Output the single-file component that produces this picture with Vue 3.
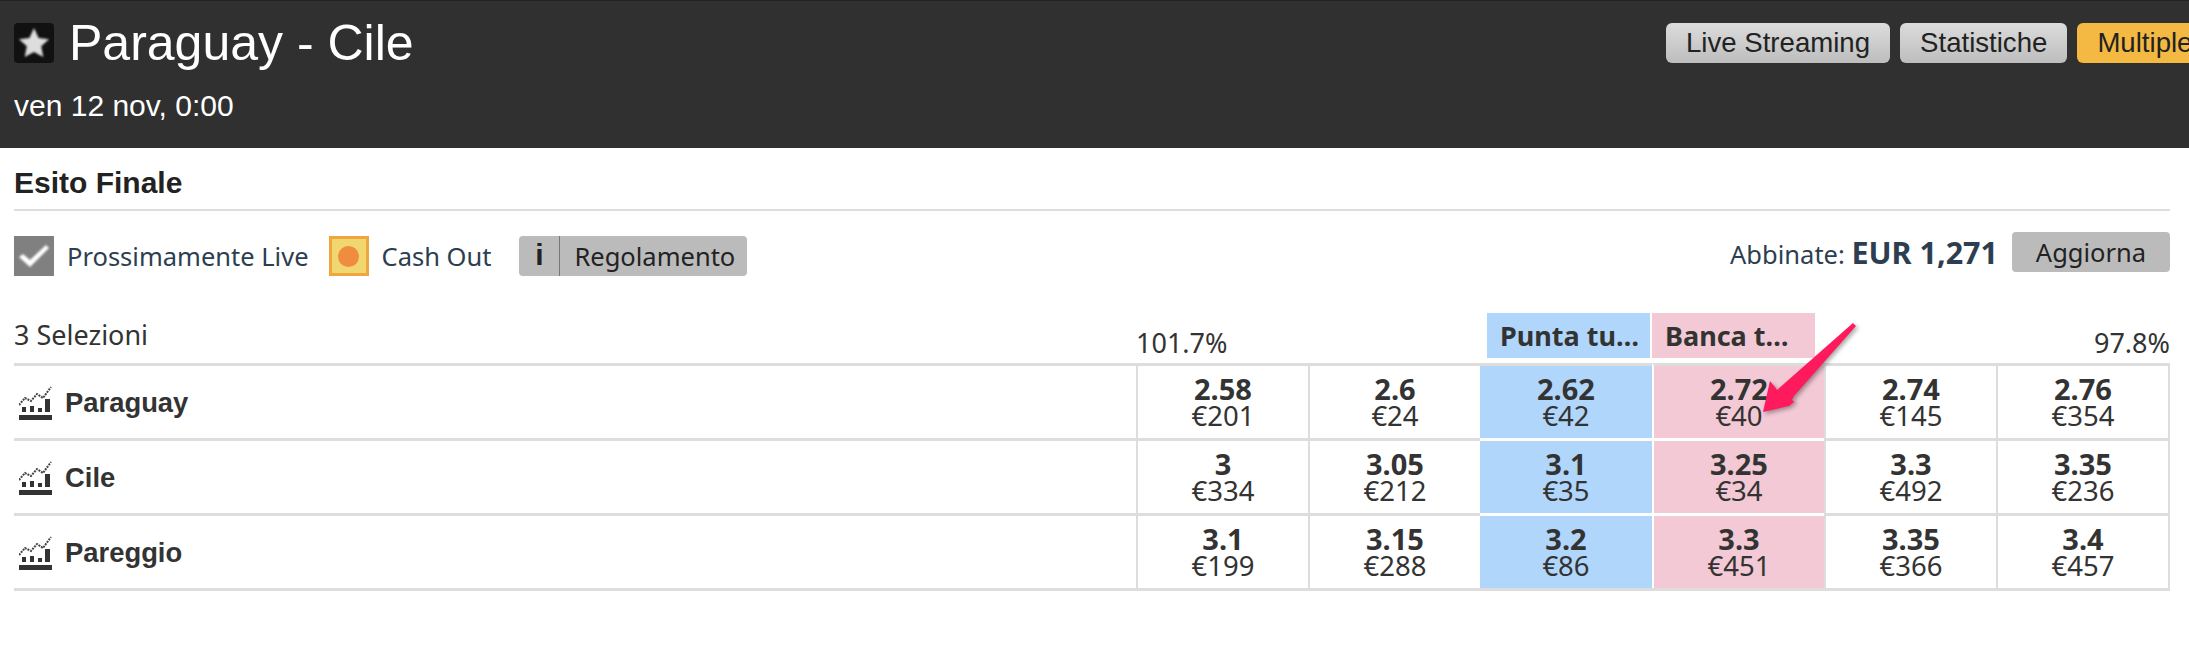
<template>
  <div class="page">
    <header class="event-head">
      <div class="event-info">
        <div class="event-title">
          <span class="fav">
            <svg width="40" height="40" viewBox="0 0 40 40"><path class="fav-star" d="M20 5l4.6 9.9 10.4 1.3-7.8 7.1 2.1 10.7L20 28.9l-9.3 5.1 2.1-10.7-7.8-7.1 10.4-1.3z" /></svg>
          </span>
          <h1>Paraguay - Cile</h1>
        </div>
        <div class="event-date">ven 12 nov, 0:00</div>
      </div>
      <div class="head-buttons">
        <button class="head-btn">Live Streaming</button>
        <button class="head-btn">Statistiche</button>
        <button class="head-btn active">Multiple</button>
      </div>
    </header>

    <main class="market">
      <h2 class="market-name">Esito Finale</h2>

      <div class="market-tools">
        <div class="tool-left">
          <span class="check-box">
            <svg width="40" height="40" viewBox="0 0 40 40"><path class="check-mark" d="M5 21l4-3 7 6L32 9l3 3-19 19z" /></svg>
          </span>
          <span class="tool-label live-label">Prossimamente Live</span>
          <span class="cash-box"><i></i></span>
          <span class="tool-label cash-label">Cash Out</span>
          <span class="rules-btn">
            <span class="rules-i">i</span>
            <span class="rules-text">Regolamento</span>
          </span>
        </div>
        <div class="tool-right">
          <span class="matched">Abbinate: <b>EUR 1,271</b></span>
          <button class="refresh">Aggiorna</button>
        </div>
      </div>

      <div class="col-head">
        <div class="sel-count">3 Selezioni</div>
        <div class="pct">101.7%</div>
        <div></div>
        <div class="all-btn back">Punta tu…</div>
        <div class="all-btn lay">Banca t…</div>
        <div></div>
        <div class="pct pct-right">97.8%</div>
      </div>

      <div class="runners">
        <div v-for="r in runners" :key="r.name" class="runner">
          <div class="runner-name">
            <svg class="chart" width="33" height="35" viewBox="0 0 33 35">
              <polyline points="0,19 6,12 12,15 18,8 24,12 32,1" fill="none" stroke="#444" stroke-width="2" stroke-dasharray="2 1" />
              <rect x="3" y="21" width="4" height="5" fill="#333" />
              <rect x="11" y="20" width="4" height="6" fill="#333" />
              <rect x="19" y="22" width="4" height="4" fill="#333" />
              <rect x="26" y="13" width="5" height="13" fill="#333" />
              <rect x="0" y="29" width="33" height="5" fill="#333" />
            </svg>
            <span>{{ r.name }}</span>
          </div>
          <div
            v-for="(p, i) in r.prices"
            :key="i"
            class="price"
            :class="{ back: i === 2, lay: i === 3 }"
          >
            <strong>{{ p[0] }}</strong>
            <span>€{{ p[1] }}</span>
          </div>
        </div>
      </div>
    </main>

    <svg class="arrow" width="110" height="105" viewBox="0 0 110 105">
      <path d="M97 4L100 7 38 77 36 81 42 86 38 83 33 87 7 93 14 62 19 68 21 71z" fill="#ff1a5e" />
    </svg>
  </div>
</template>

<script setup>
const runners = [
  {
    name: 'Paraguay',
    prices: [['2.58', 201], ['2.6', 24], ['2.62', 42], ['2.72', 40], ['2.74', 145], ['2.76', 354]]
  },
  {
    name: 'Cile',
    prices: [['3', 334], ['3.05', 212], ['3.1', 35], ['3.25', 34], ['3.3', 492], ['3.35', 236]]
  },
  {
    name: 'Pareggio',
    prices: [['3.1', 199], ['3.15', 288], ['3.2', 86], ['3.3', 451], ['3.35', 366], ['3.4', 457]]
  }
]
</script>

<style>
html,
body {
  margin: 0;
  overflow: hidden;
  background: #fff;
}
</style>

<style scoped>
.page {
  position: relative;
  width: 2189px;
  height: 650px;
  overflow: hidden;
  font-family: "Liberation Sans", Arial, sans-serif;
}

.event-head {
  display: flex;
  height: 148px;
  box-sizing: border-box;
  background: #303030;
  border-top: 1px solid #222;
  overflow: hidden;
}
.event-info {
  flex: 0 0 1666px;
  box-sizing: border-box;
  padding: 22px 0 0 14px;
}
.event-title {
  display: flex;
  align-items: center;
  height: 40px;
  gap: 15px;
}
.event-title h1 {
  margin: 0;
  font-size: 50px;
  font-weight: 400;
  color: #fff;
}
.fav {
  display: block;
  width: 40px;
  height: 40px;
  background: #111;
  border-radius: 4px;
}
.fav-star {
  fill: #ddd;
  filter: blur(1px);
}
.event-date {
  margin-top: 26px;
  font-size: 30px;
  line-height: 33px;
  color: #fff;
}
.head-buttons {
  display: flex;
  flex-shrink: 0;
  gap: 10px;
  padding-top: 22px;
}
.head-btn {
  height: 40px;
  padding: 0 20px;
  border: 0;
  border-radius: 6px;
  font-family: inherit;
  font-size: 27.6px;
  color: #222;
  white-space: nowrap;
  background: linear-gradient(#dcdcdc, #bdbdbd);
}
.head-btn.active {
  background: #f3b942;
}

.market {
  width: 2156px;
  margin-left: 14px;
}
.market-name {
  margin: 0;
  height: 63px;
  box-sizing: border-box;
  padding-top: 19px;
  border-bottom: 2px solid #ddd;
  font-size: 30px;
  line-height: 32px;
  font-weight: 700;
  color: #222;
}
.market-tools {
  display: flex;
  justify-content: space-between;
  align-items: flex-start;
  padding-top: 20px;
  height: 102px;
  box-sizing: border-box;
  font-family: "Noto Sans", sans-serif;
  color: #2c3e50;
}
.tool-left,
.tool-right {
  display: flex;
  align-items: center;
}
.tool-left {
  padding-top: 5px;
}
.check-box,
.cash-box {
  display: block;
  width: 40px;
  height: 40px;
  box-sizing: border-box;
}
.check-box {
  background: #808080;
}
.check-mark {
  fill: #fff;
  filter: blur(0.8px);
}
.cash-box {
  display: flex;
  align-items: center;
  justify-content: center;
  border: 3px solid #f0a63f;
  background: #f0d76f;
}
.cash-box i {
  width: 21px;
  height: 21px;
  border-radius: 50%;
  background: #f08c3f;
}
.tool-label {
  font-size: 25.5px;
}
.live-label {
  margin: 0 20px 0 13px;
}
.cash-label {
  margin: 0 28px 0 13px;
}
.rules-btn {
  display: flex;
  align-items: center;
  height: 40px;
  background: #bbb;
  border-radius: 4px;
  color: #222;
  font-size: 25.5px;
}
.rules-i {
  width: 40px;
  height: 40px;
  line-height: 38px;
  text-align: center;
  font-family: "Liberation Sans", sans-serif;
  font-weight: 700;
  font-size: 30px;
  border-right: 1px solid #777;
}
.rules-text {
  padding: 0 12px 0 14px;
}
.matched {
  font-size: 25.5px;
  margin-right: 14px;
}
.matched b {
  font-weight: 700;
  font-size: 30.5px;
}
.refresh {
  width: 158px;
  height: 40px;
  border: 0;
  border-radius: 4px;
  background: #bbb;
  color: #222;
  font-family: "Noto Sans", sans-serif;
  font-size: 25.5px;
  padding: 0;
}

.col-head,
.runner {
  display: grid;
  grid-template-columns: 1122px repeat(5, 172px) 174px;
}
.col-head {
  height: 50px;
  box-sizing: border-box;
  font-family: "Noto Sans", sans-serif;
  color: #333;
  font-size: 27px;
}
.sel-count {
  padding-top: 5px;
  line-height: 34px;
}
.pct {
  align-self: end;
  line-height: 30px;
  padding-bottom: 5px;
  white-space: nowrap;
}
.pct-right {
  text-align: right;
}
.all-btn {
  height: 45px;
  line-height: 45px;
  font-weight: 700;
  padding-left: 13px;
  white-space: nowrap;
  overflow: hidden;
}
.all-btn.back {
  margin-left: 7px;
  width: 163px;
  box-sizing: border-box;
}
.all-btn.lay {
  width: 163px;
  box-sizing: border-box;
}

.runners {
  border-bottom: 3px solid #ddd;
  width: 2156px;
}
.runner {
  border-top: 3px solid #ddd;
}
.runner-name {
  display: flex;
  align-items: center;
  gap: 13px;
  height: 72px;
  padding-left: 5px;
  padding-top: 2px;
  box-sizing: border-box;
  font-size: 27.4px;
  font-weight: 700;
  color: #333;
}
.price {
  display: flex;
  flex-direction: column;
  align-items: center;
  box-sizing: border-box;
  height: 72px;
  padding-top: 9px;
  border-left: 2px solid #ddd;
  font-family: "Noto Sans", sans-serif;
  font-size: 27.5px;
  line-height: 27px;
  color: #333;
}
.price:last-child {
  border-right: 2px solid #ddd;
}
.price strong {
  font-size: 29px;
  font-weight: 700;
}
.back {
  background: #b0d6fb;
}
.lay {
  background: #f2c9d4;
}
.price.back,
.price.lay {
  border-left: 0;
  margin-top: -3px;
  height: 75px;
  border-top: 3px solid #fff;
}
.runner:first-child .price.back,
.runner:first-child .price.lay {
  border-top-color: #ddd;
}
.price.lay {
  border-left: 2px solid #fff;
}

.arrow {
  position: absolute;
  left: 1756px;
  top: 319px;
  filter: drop-shadow(2px 2px 2px rgba(0, 0, 0, 0.35));
}
</style>
